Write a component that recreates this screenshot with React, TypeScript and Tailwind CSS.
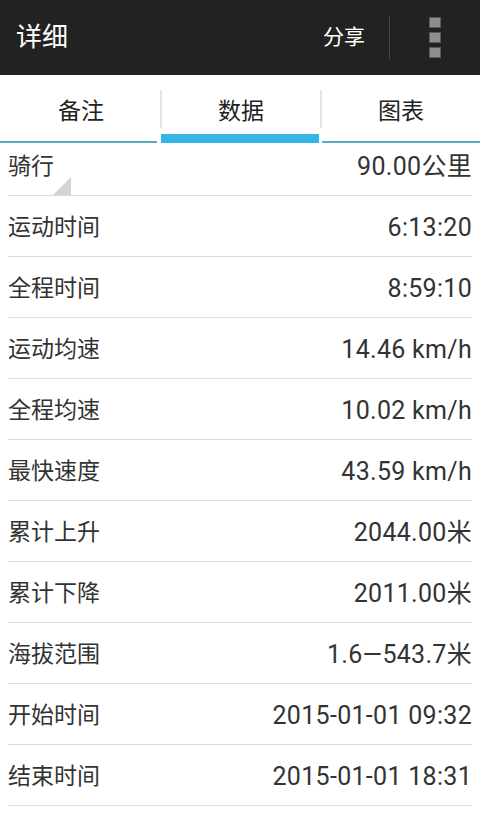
const rows: [string, string][] = [
  ['运动时间', '6:13:20'],
  ['全程时间', '8:59:10'],
  ['运动均速', '14.46 km/h'],
  ['全程均速', '10.02 km/h'],
  ['最快速度', '43.59 km/h'],
  ['累计上升', '2044.00米'],
  ['累计下降', '2011.00米'],
  ['海拔范围', '1.6—543.7米'],
  ['开始时间', '2015-01-01 09:32'],
  ['结束时间', '2015-01-01 18:31'],
];

const font = { fontFamily: 'Roboto, "Noto Sans CJK SC", sans-serif' };

export default function App() {
  return (
    <div className="w-[480px] h-[816px] bg-white overflow-hidden" style={font}>
      <header className="h-[75px] bg-[#222222] flex items-center">
        <h1 className="pl-4 flex-1 text-[26px] text-white">详细</h1>
        <span className="text-[21px] text-white pr-6">分享</span>
        <div className="w-px h-[45px] bg-[#444444]" />
        <div className="w-[90px] flex flex-col items-center gap-1">
          <span className="w-3 h-[11px] bg-[#8e8e8e] border border-[#5a5a5a]" />
          <span className="w-3 h-[11px] bg-[#8e8e8e] border border-[#5a5a5a]" />
          <span className="w-3 h-[11px] bg-[#8e8e8e] border border-[#5a5a5a]" />
        </div>
      </header>

      <nav className="h-[68px] flex">
        {['备注', '数据', '图表'].map((t, i) => (
          <div key={t} className="flex-1 flex flex-col">
            <div className="flex-1 flex items-center">
              <div className={`w-[2px] h-[38px] mt-2 ${i === 0 ? 'bg-transparent' : 'bg-[#e4e4e4]'}`} />
              <span className="flex-1 text-center text-[23px] text-[#222222] pt-4">{t}</span>
            </div>
            <div className={`h-[9px] flex items-end ${i === 0 ? 'pr-[3px]' : i === 1 ? 'px-px' : 'pl-[2px]'}`}>
              <div className={`w-full ${i === 1 ? 'h-[9px] bg-[#33b5e5]' : 'h-[2px] bg-[#56acc4]'}`} />
            </div>
          </div>
        ))}
      </nav>

      <div className="px-2">
        <div className="relative h-[53px] flex items-center justify-between border-b border-[#dddddd] text-[#333333]">
          <span className="pb-1 text-[23px]">骑行</span>
          <span className="pb-1 text-[25px] tracking-[0.3px]">90.00公里</span>
          <div className="absolute left-[45px] bottom-0 w-0 h-0 border-l-[18px] border-l-transparent border-b-[18px] border-b-[#d4d4d4]" />
        </div>
        {rows.map(([k, v]) => (
          <div key={k} className="h-[61px] flex items-center justify-between border-b border-[#dddddd] text-[#333333] pt-1">
            <span className="text-[23px]">{k}</span>
            <span className="text-[25px] tracking-[0.3px]">{v}</span>
          </div>
        ))}
      </div>
    </div>
  );
}
